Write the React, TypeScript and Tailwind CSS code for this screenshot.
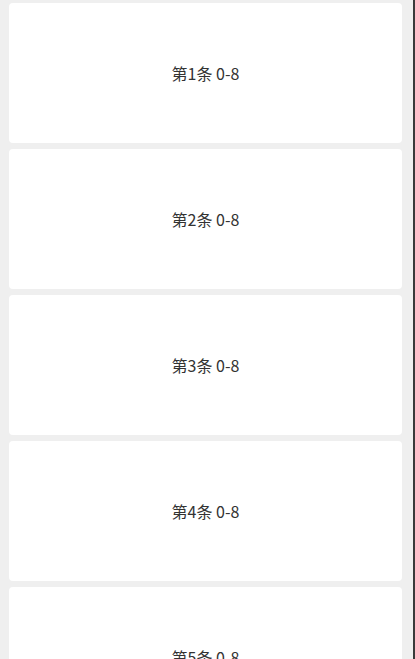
import React from "react";

const items = [1, 2, 3, 4, 5];

export default function App() {
  return (
    <div className="h-[659px] w-[415px] flex flex-row overflow-hidden bg-[#efefef] font-['Microsoft_YaHei','Noto_Sans_CJK_SC',sans-serif]">
      <div className="flex-1 flex flex-col gap-[6px] pt-[3px] pl-[9px] pr-[11px]">
        {items.map((n) => (
          <div
            key={n}
            className="h-[140px] shrink-0 bg-white rounded-[4px] flex items-center justify-center text-[16px] text-[#333333]"
          >
            第{n}条 0-8
          </div>
        ))}
      </div>
      <div className="w-[2px] h-full bg-[#3a3a3a]" />
    </div>
  );
}
